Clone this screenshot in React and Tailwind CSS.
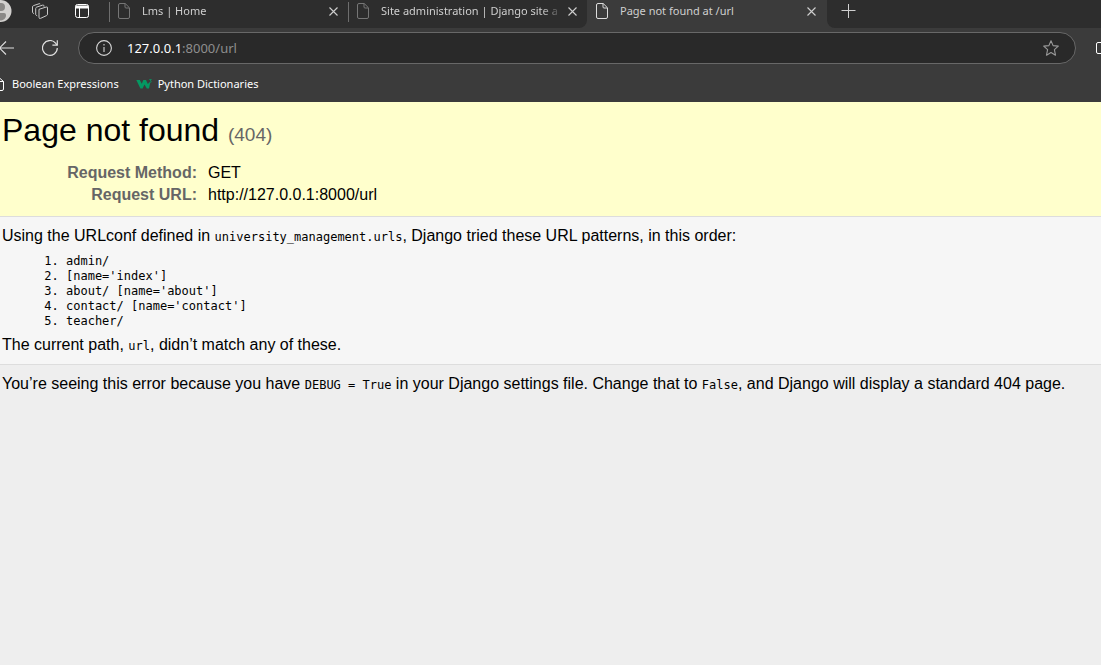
import React from "react";

function DocIcon({ className }) {
  return (
    <svg viewBox="0 0 12 16" className={`h-4 w-3 shrink-0 ${className}`} fill="none" stroke="currentColor" aria-hidden="true">
      <path d="M2 .5h5.2L11.500 4.800V14a1.500 1.500 0 0 1-1.500 1.500H2A1.500 1.500 0 0 1 .5 14V2A1.500 1.500 0 0 1 2 .5z" />
      <path d="M7 .7V4a1 1 0 0 0 1 1h3.300" />
    </svg>
  );
}

function CloseIcon() {
  return (
    <svg viewBox="0 0 9 9" className="size-[9px]" fill="none" stroke="currentColor" aria-hidden="true">
      <path d="M.5 .5l8 8M8.500 .5l-8 8" strokeWidth="1.100" />
    </svg>
  );
}

function Tab({ title, active }) {
  return (
    <div className={`flex h-7 shrink-0 items-start pt-[3px] ${active ? "w-60 bg-[#3b3b3b]" : "w-[239px]"}`}>
      <span className={`-mt-px h-5 w-px shrink-0 ${active ? "" : "bg-[#6e6e6e]"}`} />
      <DocIcon className={`ml-2 ${active ? "text-[#dcdcdc]" : "text-[#767676]"}`} />
      <a
        href="#tab"
        className={`ml-3 w-[180px] whitespace-nowrap text-[11px] leading-4 text-[#cfcfcf] ${
          active ? "" : "[mask-image:linear-gradient(to_right,black_160px,transparent_182px)]"
        }`}
      >
        {title}
      </a>
      <button type="button" aria-label={`Close ${title}`} className="ml-[5px] flex h-[17px] w-3 items-center justify-center text-[#cfcfcf]">
        <CloseIcon />
      </button>
    </div>
  );
}

function TabStrip() {
  return (
    <div className="flex h-7 bg-[#3b3b3b]">
      <div className="flex shrink-0 rounded-br-lg bg-[#2d2d2d]">
        <div className="flex w-[109px] items-start">
          <button type="button" aria-label="Profile" className="w-3 overflow-hidden">
            <svg viewBox="0 0 12 22" className="h-[22px] w-3" aria-hidden="true">
              <circle cx="0.500" cy="11" r="11" fill="#d2d0ce" />
              <circle cx="1" cy="7" r="4" fill="#8a8886" />
              <path d="M-6 13h10a2 2 0 0 1 2 2c0 4-3 5.500-6 5.500z" fill="#8a8886" />
            </svg>
          </button>
          <button type="button" aria-label="Workspaces" className="ml-5 mt-[3px]">
            <svg viewBox="0 0 16 16" className="size-4" fill="none" stroke="#c8c8c8" strokeLinejoin="round" aria-hidden="true">
              <path d="M7 6.300l7.300-2.300a.9.9 0 0 1 1.200.9v6.300a1.500 1.500 0 0 1-1 1.400l-5.800 2.700a1.200 1.200 0 0 1-1.700-1.100z" />
              <path d="M5.200 12.800l-.9-.4a1 1 0 0 1-.6-1V5.500a1.500 1.500 0 0 1 1-1.400l6-2a1 1 0 0 1 1.300.8v.8" />
              <path d="M2 10.600l-.9-.5a1 1 0 0 1-.6-1V4a1.500 1.500 0 0 1 1-1.400L7.300.7a1 1 0 0 1 1.200.5" />
            </svg>
          </button>
          <button type="button" aria-label="Tab actions" className="ml-[27px] mt-1">
            <svg viewBox="0 0 14 14" className="size-3.5" fill="none" stroke="#fff" aria-hidden="true">
              <rect x=".5" y=".5" width="13" height="13" rx="2" />
              <path d="M1 2h12v2H1z" fill="#fff" />
              <path d="M4.500 4v9.500" />
            </svg>
          </button>
        </div>
        <Tab title="Lms | Home" />
        <Tab title="Site administration | Django site a" />
      </div>
      <Tab title="Page not found at /url" active />
      <div className="flex grow items-start rounded-bl-lg bg-[#2d2d2d]">
        <button type="button" aria-label="New tab" className="ml-3.5 mt-1 text-[#d0d0d0]">
          <svg viewBox="0 0 15 14" className="h-3.5 w-[15px]" fill="none" stroke="currentColor" aria-hidden="true">
            <path d="M7.500 0v14M.5 6.500h14" />
          </svg>
        </button>
      </div>
    </div>
  );
}

function Toolbar() {
  return (
    <div className="flex items-center pt-1">
      <button type="button" aria-label="Back" className="text-[#e0e0e0]">
        <svg viewBox="0 0 14 14" className="size-3.5" fill="none" stroke="currentColor" aria-hidden="true">
          <path d="M6 .5L-.5 7 6 13.500M-.5 7H14" strokeWidth="1.100" />
        </svg>
      </button>
      <button type="button" aria-label="Refresh" className="ml-7 text-[#e0e0e0]">
        <svg viewBox="0 0 16 16" className="size-4" fill="none" stroke="currentColor" aria-hidden="true">
          <path d="M15.300 8A7.400 7.400 0 1 1 13.600 3.200L14.800 4.800" strokeWidth="1.200" />
          <path d="M15.300.3v4.900h-4.900" strokeWidth="1.200" />
        </svg>
      </button>
      <div className="ml-5 flex h-8 grow items-center rounded-full border border-[#686868] bg-[#292929] pl-[17px] pr-4">
        <button type="button" aria-label="Site information" className="text-[#d6d6d6]">
          <svg viewBox="0 0 16 16" className="size-4" fill="none" stroke="currentColor" aria-hidden="true">
            <circle cx="8" cy="8" r="7.400" strokeWidth="1.100" />
            <path d="M8 7v5M8 4v1.400" strokeWidth="1.100" />
          </svg>
        </button>
        <a href="#address" aria-label="Address" className="ml-[15px] text-[13px] leading-5 text-[#8e8e8e]">
          <span className="text-white">127.0.0.1</span>:8000/url
        </a>
        <button type="button" aria-label="Add to favorites" className="ml-auto text-[#9a9a9a]">
          <svg viewBox="0 0 16 16" className="size-4" fill="none" stroke="currentColor" strokeLinejoin="round" aria-hidden="true">
            <path d="M8 .7l2.100 4.900 5.200.5-3.900 3.600 1.100 5.500L8 12.500l-4.500 2.700 1.100-5.500L.7 6.100l5.200-.5z" strokeWidth="1.100" />
          </svg>
        </button>
      </div>
      <button type="button" aria-label="Split screen" className="ml-5 w-[5px] overflow-hidden text-white">
        <svg viewBox="0 0 5 12" className="h-3 w-[5px]" fill="none" stroke="currentColor" aria-hidden="true">
          <path d="M5 .5H2A1.500 1.500 0 0 0 .5 2v8A1.500 1.500 0 0 0 2 11.500h3" />
        </svg>
      </button>
    </div>
  );
}

function Bookmarks() {
  return (
    <nav aria-label="Favorites" className="flex h-[38px] items-center pt-px text-[11px] leading-4 text-white">
      <a href="#boolean" className="flex items-center gap-2">
        <svg viewBox="8 0 4 14" className="h-3.5 w-1" fill="none" stroke="#fff" aria-hidden="true">
          <path d="M7 .5l4.500 4V12a1.500 1.500 0 0 1-1.500 1.500H7M7.500 4.500h4" />
        </svg>
        Boolean Expressions
      </a>
      <a href="#dictionaries" className="ml-[17px] flex items-center gap-[5px]">
        <svg viewBox="0 0 17 12" className="h-3 w-[17px]" aria-hidden="true">
          <path d="M.3 2h3.500l2 3.800L7.300 2H10l1.800 4 1.200-1.200h1.200L13 10.500h-2.200L8.500 6.500 6.600 10.500H4.400z" fill="#059862" />
          <path d="M13.300 1.500h2L14.200 3c1.800 0 1.400 2-.9 1.500" stroke="#059862" fill="none" strokeWidth=".8" />
        </svg>
        Python Dictionaries
      </a>
    </nav>
  );
}

const PATTERNS = ["admin/", "[name='index']", "about/ [name='about']", "contact/ [name='contact']", "teacher/"];

function Code({ children }) {
  return <code className="font-['DejaVu_Sans_Mono',monospace] text-xs leading-none">{children}</code>;
}

export default function App() {
  return (
    <div className="flex min-h-screen flex-col bg-[#eee] font-['Liberation_Sans',Arial,sans-serif] text-base leading-[18px] text-black">
      <header className="overflow-hidden bg-[#3b3b3b] font-['Noto_Sans',sans-serif]">
        <TabStrip />
        <Toolbar />
        <Bookmarks />
      </header>
      <main>
        <section className="border-b border-[#ddd] bg-[#ffc] px-0.5 pb-2.5 pt-2.5">
          <h1 className="text-[32px] leading-9">
            Page not found <small className="text-[19px] text-[#666]">(404)</small>
          </h1>
          <table className="mt-[9px]">
            <tbody>
              <tr className="h-[22px]">
                <th scope="row" className="w-[195px] p-0 text-right text-[#666]">Request Method:</th>
                <td className="p-0 pl-[11px]">GET</td>
              </tr>
              <tr className="h-[22px]">
                <th scope="row" className="w-[195px] p-0 text-right text-[#666]">Request URL:</th>
                <td className="p-0 pl-[11px]">http://127.0.0.1:8000/url</td>
              </tr>
            </tbody>
          </table>
        </section>
        <section className="border-b border-[#ddd] bg-[#f6f6f6] px-0.5 py-2.5">
          <p>
            Using the URLconf defined in <Code>university_management.urls</Code>, Django tried these URL patterns, in this order:
          </p>
          <ol className="mb-[7px] ml-16 mt-[9px] list-decimal font-['DejaVu_Sans_Mono',monospace] text-xs leading-[15px]">
            {PATTERNS.map((pattern) => (
              <li key={pattern}>{pattern}</li>
            ))}
          </ol>
          <p>
            The current path, <Code>url</Code>, didn’t match any of these.
          </p>
        </section>
        <section className="px-0.5 py-2.5">
          <p>
            You’re seeing this error because you have <Code>DEBUG = True</Code> in your Django settings file. Change that to{" "}
            <Code>False</Code>, and Django will display a standard 404 page.
          </p>
        </section>
      </main>
    </div>
  );
}
